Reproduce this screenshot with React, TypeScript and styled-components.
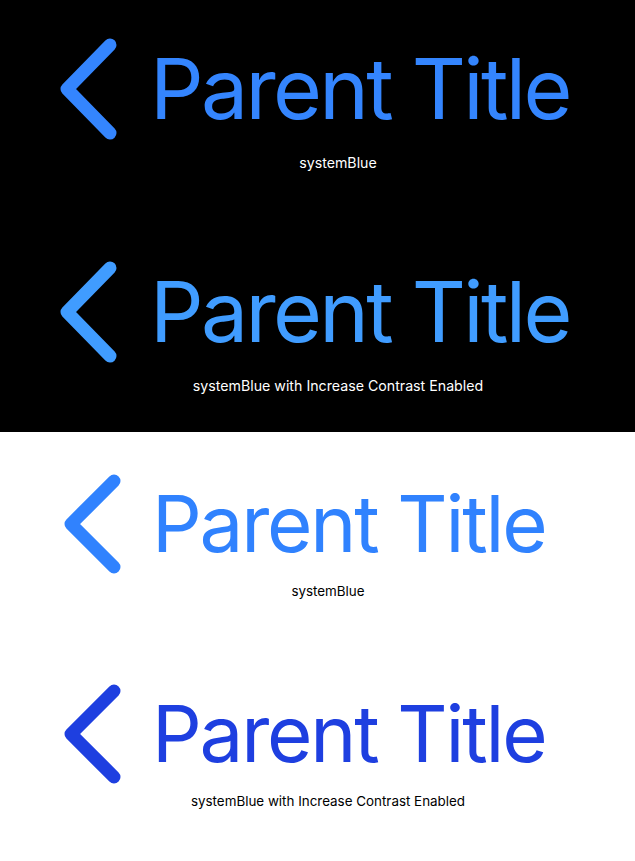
import React from "react";
import styled, { createGlobalStyle } from "styled-components";

const Global = createGlobalStyle`
  html, body { margin: 0; padding: 0; }
  body { font-family: Inter, "Noto Sans", sans-serif; }
`;

const Panel = styled.div<{ $dark?: boolean; $h: number }>`
  background: ${(p) => (p.$dark ? "#000000" : "#ffffff")};
  height: ${(p) => p.$h}px;
  display: flex;
  flex-direction: column;
  overflow: hidden;
`;

const Sample = styled.section<{ $top: number }>`
  margin-top: ${(p) => p.$top}px;
  display: flex;
  flex-direction: column;
`;

const Row = styled.div<{ $left: number; $gap: number }>`
  display: flex;
  align-items: center;
  padding-left: ${(p) => p.$left}px;
  gap: ${(p) => p.$gap}px;
`;

const Title = styled.span<{ $size: number; $color: string; $track: number }>`
  font-family: Inter, sans-serif;
  font-size: ${(p) => p.$size}px;
  line-height: 1;
  color: ${(p) => p.$color};
  letter-spacing: ${(p) => p.$track}px;
  white-space: nowrap;
`;

const Caption = styled.div<{ $dark?: boolean; $top: number; $shift: number; $size: number }>`
  margin-top: ${(p) => p.$top}px;
  padding-left: ${(p) => p.$shift}px;
  text-align: center;
  font-family: Inter, sans-serif;
  font-size: ${(p) => p.$size}px;
  line-height: 17px;
  color: ${(p) => (p.$dark ? "#ffffff" : "#000000")};
`;

const Chevron = ({ color, h }: { color: string; h: number }) => (
  <svg width={57} height={h} viewBox={`0 0 57 ${h}`} fill="none">
    <path
      d={`M50 7 L7 ${h / 2} L50 ${h - 7}`}
      stroke={color}
      strokeWidth={13}
      strokeLinecap="round"
      strokeLinejoin="round"
    />
  </svg>
);

type S = {
  color: string;
  size: number;
  track: number;
  top: number;
  left: number;
  gap: number;
  h: number;
  capTop: number;
  capSize: number;
  shift: number;
  caption: string;
  dark?: boolean;
};

const Item = ({ s }: { s: S }) => (
  <Sample $top={s.top}>
    <Row $left={s.left} $gap={s.gap}>
      <Chevron color={s.color} h={s.h} />
      <Title $size={s.size} $color={s.color} $track={s.track}>
        Parent Title
      </Title>
    </Row>
    <Caption $dark={s.dark} $top={s.capTop} $shift={s.shift} $size={s.capSize}>
      {s.caption}
    </Caption>
  </Sample>
);

const darkItems: S[] = [
  { color: "#3485FE", size: 84, track: -2.7, top: 38, left: 60, gap: 33, h: 102, capTop: 14, capSize: 14.2, shift: 41, caption: "systemBlue", dark: true },
  { color: "#409CFF", size: 84, track: -2.7, top: 90, left: 60, gap: 33, h: 102, capTop: 14, capSize: 14.2, shift: 41, caption: "systemBlue with Increase Contrast Enabled", dark: true },
];

const lightItems: S[] = [
  { color: "#3082FE", size: 78, track: -2.2, top: 42, left: 64, gap: 31, h: 100, capTop: 9, capSize: 13.4, shift: 21, caption: "systemBlue" },
  { color: "#1E3FE0", size: 78, track: -2.2, top: 84, left: 64, gap: 31, h: 100, capTop: 9, capSize: 13.4, shift: 21, caption: "systemBlue with Increase Contrast Enabled" },
];

export default function App() {
  return (
    <>
      <Global />
      <Panel $dark $h={432}>
        {darkItems.map((s, i) => (
          <Item key={i} s={s} />
        ))}
      </Panel>
      <Panel $h={429}>
        {lightItems.map((s, i) => (
          <Item key={i} s={s} />
        ))}
      </Panel>
    </>
  );
}
